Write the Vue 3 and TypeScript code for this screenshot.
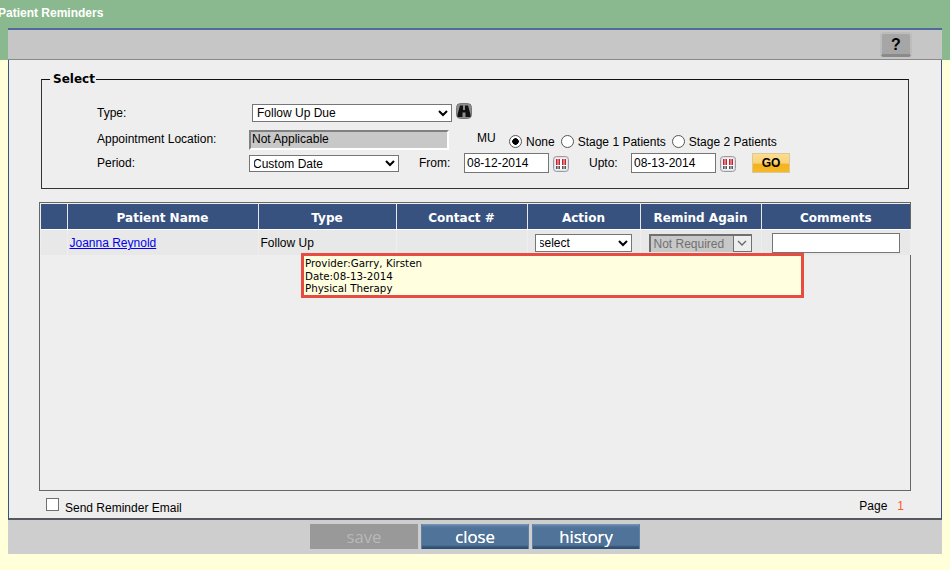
<script setup lang="ts">
const columns: string[] = ['', 'Patient Name', 'Type', 'Contact #', 'Action', 'Remind Again', 'Comments']
const widths: number[] = [26, 191, 138, 131, 113, 121, 149]
</script>

<template>
  <div class="page">
    <header class="top">
      <div class="title">Patient Reminders</div>
      <div class="toolbar">
        <button class="help" type="button">?</button>
      </div>
    </header>

    <main class="content">
      <fieldset class="select-box">
        <legend>Select</legend>
        <div class="row row-type">
          <label class="lbl">Type:</label>
          <select class="type-select"><option>Follow Up Due</option></select>
          <svg class="binoc" viewBox="0 0 16 16" width="16" height="16">
            <rect x="0.5" y="0.5" width="15" height="15" rx="4" fill="#8d8d8d" stroke="#777" />
            <path d="M4 2.500h3v4.500h2V2.500h3l2.500 9v2.500H9.500V9.500h-3V14H1.500v-2.500z" fill="#111" />
          </svg>
        </div>
        <div class="row row-loc">
          <label class="lbl">Appointment Location:</label>
          <div class="readonly">Not Applicable</div>
          <span class="mu">MU</span>
          <label class="radio first"><input type="radio" name="mu" checked /><span>None</span></label>
          <label class="radio"><input type="radio" name="mu" /><span>Stage 1 Patients</span></label>
          <label class="radio"><input type="radio" name="mu" /><span>Stage 2 Patients</span></label>
        </div>
        <div class="row row-period">
          <label class="lbl">Period:</label>
          <select class="period-select"><option>Custom Date</option></select>
          <span class="from">From:</span>
          <input class="date" type="text" value="08-12-2014" />
          <svg class="cal" viewBox="0 0 16 16" width="16" height="16">
            <rect x="0.5" y="0.5" width="15" height="15" rx="3" fill="#dfdfe8" stroke="#9a9aa2" />
            <rect x="2.500" y="2.500" width="11" height="11" fill="#fff" />
            <path d="M3 3h4v6H3zM9 3h4v6H9z" fill="#c8202a" />
            <path d="M3 10h4v3H3zM9 10h4v3H9z" fill="#555" />
            <path d="M5 3v10M11 3v10" stroke="#fff" stroke-width="0.800" />
          </svg>
          <span class="upto">Upto:</span>
          <input class="date" type="text" value="08-13-2014" />
          <svg class="cal" viewBox="0 0 16 16" width="16" height="16">
            <rect x="0.5" y="0.5" width="15" height="15" rx="3" fill="#dfdfe8" stroke="#9a9aa2" />
            <rect x="2.500" y="2.500" width="11" height="11" fill="#fff" />
            <path d="M3 3h4v6H3zM9 3h4v6H9z" fill="#c8202a" />
            <path d="M3 10h4v3H3zM9 10h4v3H9z" fill="#555" />
            <path d="M5 3v10M11 3v10" stroke="#fff" stroke-width="0.800" />
          </svg>
          <button class="go" type="button">GO</button>
        </div>
      </fieldset>

      <section class="results">
        <table>
          <colgroup>
            <col v-for="(w, i) in widths" :key="i" :style="{ width: w + 'px' }" />
          </colgroup>
          <thead>
            <tr>
              <th v-for="c in columns" :key="c">{{ c }}</th>
            </tr>
          </thead>
          <tbody>
            <tr>
              <td></td>
              <td class="text"><a href="#" class="name">Joanna Reynold</a></td>
              <td class="text">Follow Up</td>
              <td></td>
              <td class="action"><select class="action-select"><option>select</option></select></td>
              <td class="remind">
                <div class="remind-wrap">
                  <select class="remind-select" disabled><option>Not Required</option></select>
                  <span class="remind-arrow">
                    <svg viewBox="0 0 10 6" width="10" height="6">
                      <path d="M1 1l4 4 4-4" fill="none" stroke="#666" stroke-width="1.300" />
                    </svg>
                  </span>
                </div>
              </td>
              <td class="comment"><input class="comment-input" type="text" /></td>
            </tr>
          </tbody>
        </table>
        <div class="tip">
          <div>Provider:Garry, Kirsten</div>
          <div>Date:08-13-2014</div>
          <div>Physical Therapy</div>
        </div>
      </section>

      <div class="bottom">
        <label class="send"><input type="checkbox" /><span>Send Reminder Email</span></label>
        <div class="pager">Page<b>1</b></div>
      </div>
    </main>

    <footer class="actions">
      <button class="btn disabled" type="button">save</button>
      <button class="btn" type="button">close</button>
      <button class="btn" type="button">history</button>
    </footer>
  </div>
</template>

<style>
html, body { margin: 0; background: #ffffd9; }
</style>

<style scoped>
.page {
  width: 950px;
  height: 570px;
  overflow: hidden;
  background: #ffffd9;
  font-family: "Liberation Sans", Arial, sans-serif;
  font-size: 12px;
  color: #000;
}
.top {
  height: 60px;
  background: #8ab98f;
  padding: 0 8px;
  box-sizing: border-box;
}
.title {
  height: 28px;
  margin-left: -10px;
  line-height: 26px;
  font-weight: bold;
  color: #fff;
}
.toolbar {
  height: 32px;
  box-sizing: border-box;
  background: #c6c6c6;
  border-top: 2px solid #506a9c;
  border-bottom: 1px solid #8a8a8a;
  display: flex;
  justify-content: flex-end;
  padding: 2px 30px 0 0;
}
.help {
  width: 32px;
  height: 25px;
  padding: 2px 0 0;
  border: 2px solid #bcbcbc;
  border-bottom: 3px solid #8a8a8a;
  border-radius: 4px;
  background: #a6a6a6;
  font: bold 16px "Liberation Sans", sans-serif;
  color: #000;
}
.content {
  margin: 0 8px;
  height: 460px;
  box-sizing: border-box;
  background: #eeeeee;
  border-left: 1px solid #3a5480;
  border-right: 1px solid #3a5480;
  border-bottom: 2px solid #55585e;
  padding: 12px 30px 0;
  display: flex;
  flex-direction: column;
}
.select-box {
  margin: 0 0 0 2px;
  width: 868px;
  height: 119px;
  box-sizing: border-box;
  border: 1px solid #333;
  border-top-color: #111;
  padding: 0 0 0 55px;
}
legend {
  margin-left: -47px;
  padding: 0 0 0 3px;
  width: 46px;
  box-sizing: border-box;
  font: bold 12px/14px "DejaVu Sans", sans-serif;
}
.row {
  display: flex;
  align-items: center;
}
.lbl { width: 152px; flex: none; }
.row-type { height: 20px; margin-top: 17px; }
.type-select {
  width: 200px;
  height: 18px;
  margin: -1px 0 0 3px;
  font: 12px "Liberation Sans", sans-serif;
  padding: 0;
  background: #fff;
  border: 1px solid #767676;
  box-sizing: border-box;
}
.binoc { margin: -4px 0 0 4px; }
.row-loc { height: 20px; margin-top: 6px; }
.readonly {
  align-self: flex-start;
  margin-top: 1px;
  width: 200px;
  height: 20px;
  box-sizing: border-box;
  border: 2px solid;
  border-color: #808080 #fff #fff #808080;
  background: #c8c8c8;
  line-height: 14px;
  padding-left: 1px;
}
.mu { margin: 0 0 0 28px; width: 32px; position: relative; top: -1px; }
.radio {
  display: flex;
  align-items: center;
  margin-right: 6px;
  position: relative;
  top: 2px;
}
.radio input {
  appearance: none;
  box-sizing: border-box;
  margin: 0 4px 0 0;
  width: 13px;
  height: 13px;
  border: 1px solid #555;
  border-radius: 50%;
  background: #fff;
}
.radio input:checked {
  background: radial-gradient(circle, #000 0 3px, #fff 3.500px);
}
.radio span { position: relative; top: 1px; }
.row-period { height: 20px; margin-top: 4px; }
.period-select {
  width: 150px;
  height: 17px;
  margin-top: 1px;
  font: 12px "Liberation Sans", sans-serif;
  text-indent: -1px;
  background: #fff;
  border: 1px solid #767676;
  box-sizing: border-box;
  padding: 0;
}
.from { margin-left: 20px; width: 45px; }
.upto { margin-left: 20px; width: 42px; }
.date {
  width: 85px;
  height: 20px;
  box-sizing: border-box;
  border: 1px solid #767676;
  padding: 0 0 0 2px;
  font: 12px "Liberation Sans", sans-serif;
  background: #fff;
}
.cal { margin: 1px 0 0 4px; }
.go {
  margin-left: 16px;
  width: 38px;
  height: 20px;
  padding: 0;
  border: 1px solid #d9c89a;
  background: linear-gradient(#fcdd92 0, #fbd27a 50%, #f5b21a 58%, #f5b92a 100%);
  font: bold 12px "Liberation Sans", sans-serif;
  color: #000;
}
.results {
  position: relative;
  margin-top: 13px;
  width: 872px;
  height: 289px;
  box-sizing: border-box;
  border: 1px solid #666;
  padding: 1px;
  flex: none;
}
table {
  table-layout: fixed;
  width: 869px;
  border-collapse: collapse;
}
th {
  height: 25px;
  padding: 3px 0 0;
  box-sizing: border-box;
  background: #38527f;
  color: #fff;
  font: bold 12px "DejaVu Sans", sans-serif;
  border-right: 1px solid #e8e8e8;
  border-bottom: 1px solid #fff;
}
th:last-child { border-right: none; }
td {
  height: 26px;
  padding: 0 0 0 2px;
  background: #e8e8e8;
  border-right: 1px solid #eee;
  vertical-align: middle;
  box-sizing: border-box;
}
td.text { padding-top: 2px; }
td.action, td.remind { padding-top: 1px; }
td.comment { padding-top: 2px; }
.name { color: #0000ee; }
.action-select {
  width: 97px;
  height: 18px;
  margin-left: 5px;
  font: 12px "Liberation Sans", sans-serif;
  padding: 0;
  text-indent: -1px;
  background: #fff;
  border: 1px solid #767676;
  box-sizing: border-box;
  display: block;
}
.remind-wrap {
  position: relative;
  width: 103px;
  height: 18px;
  margin-left: 6px;
}
.remind-select {
  appearance: none;
  width: 103px;
  height: 18px;
  font: 12px "Liberation Sans", sans-serif;
  padding: 0 0 0 3px;
  color: #707070;
  opacity: 1;
  background: #c8c8c8;
  border: 2px solid #707070;
  border-right-width: 1px;
  border-bottom-width: 0;
  box-sizing: border-box;
  display: block;
}
.remind-arrow {
  position: absolute;
  right: 0;
  top: 1px;
  width: 19px;
  height: 17px;
  box-sizing: border-box;
  border: 1px solid #707070;
  background: #eee;
  display: flex;
  align-items: center;
  justify-content: center;
}
.comment-input {
  display: block;
  width: 128px;
  height: 20px;
  margin-left: 8px;
  box-sizing: border-box;
  border: 1px solid #767676;
  background: #fff;
}
.tip {
  position: absolute;
  left: 261px;
  top: 50px;
  width: 503px;
  height: 45px;
  box-sizing: border-box;
  background: #ffffe0;
  border: 3px solid #e74c43;
  padding: 1px 0 0 1px;
  font: 10.300px/12.500px "DejaVu Sans", sans-serif;
}
.bottom {
  display: flex;
  justify-content: space-between;
  width: 872px;
  height: 27px;
}
.send {
  display: flex;
  align-items: center;
  margin-left: 7px;
}
.send input {
  appearance: none;
  box-sizing: border-box;
  margin: 0 6px 0 0;
  width: 13px;
  height: 13px;
  border: 1px solid #707070;
  background: #fff;
}
.send span { position: relative; top: 3px; }
.pager {
  line-height: 31px;
  margin-right: 7px;
}
.pager b {
  font-weight: normal;
  color: #ff5a2c;
  margin-left: 10px;
}
.actions {
  margin: 0 8px;
  height: 34px;
  background: #cecece;
  display: flex;
  justify-content: center;
  gap: 3px;
  padding: 4px 0 0 0;
  box-sizing: border-box;
}
.btn {
  width: 108px;
  height: 25px;
  padding: 0 0 1px;
  border: none;
  background: linear-gradient(#7b98b8 0, #5c7da2 2px, #4f7399 4px, #4f7399 21px, #345475 23px, #2d4d72 25px);
  box-shadow: inset 1px 0 0 #5f80a4, inset -1px 0 0 #5f80a4;
  color: #fff;
  font: 16.700px "Open Sans", sans-serif;
  text-shadow: 0 0 0.500px #fff;
}
.btn.disabled {
  background: #999;
  box-shadow: none;
  text-shadow: none;
  color: #b8b8b8;
}
</style>
